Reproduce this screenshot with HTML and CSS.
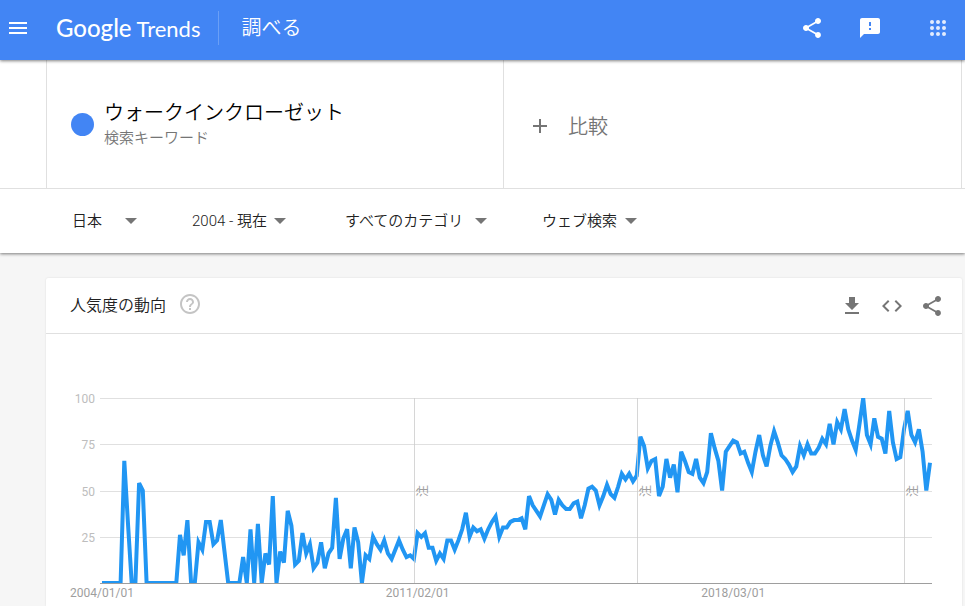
FILE: index.html
```
<!DOCTYPE html>
<html lang="ja">
<head>
  <meta charset="UTF-8">
  <meta name="viewport" content="width=device-width, initial-scale=1.0">
  <title>Google Trends</title>
  <link rel="stylesheet" href="styles.css">
</head>
<body>

  <!-- Header -->
  <header class="header">
    <button class="icon-btn menu-btn" aria-label="メニュー">
      <svg width="24" height="24" viewBox="0 0 24 24"><path d="M3 18h18v-2H3v2zm0-5h18v-2H3v2zm0-7v2h18V6H3z"/></svg>
    </button>
    <a href="#" class="logo"><span class="logo-google">Google</span> <span class="logo-trends">Trends</span></a>
    <a href="#" class="page-name">調べる</a>
    <div class="header-actions">
      <button class="icon-btn" aria-label="共有">
        <svg width="24" height="24" viewBox="0 0 24 24"><path d="M18 16.08c-.76 0-1.44.3-1.96.77L8.91 12.7c.05-.23.09-.46.09-.7s-.04-.47-.09-.7l7.05-4.11c.54.5 1.25.81 2.04.81 1.66 0 3-1.34 3-3s-1.34-3-3-3-3 1.34-3 3c0 .24.04.47.09.7L8.04 9.81C7.5 9.31 6.79 9 6 9c-1.66 0-3 1.34-3 3s1.34 3 3 3c.79 0 1.5-.31 2.04-.81l7.12 4.16c-.05.21-.08.43-.08.65 0 1.61 1.31 2.92 2.92 2.92s2.92-1.31 2.92-2.92-1.31-2.92-2.92-2.92z"/></svg>
      </button>
      <button class="icon-btn" aria-label="フィードバックを送信">
        <svg width="24" height="24" viewBox="0 0 24 24"><path d="M20 2H4c-1.1 0-1.99.9-1.99 2L2 22l4-4h14c1.1 0 2-.9 2-2V4c0-1.100-.9-2-2-2zm-7 12h-2v-2h2v2zm0-4h-2V6h2v4z"/></svg>
      </button>
      <button class="icon-btn apps-btn" aria-label="Google アプリ">
        <svg width="24" height="24" viewBox="0 0 24 24">
          <circle cx="6" cy="6" r="2"/><circle cx="12" cy="6" r="2"/><circle cx="18" cy="6" r="2"/>
          <circle cx="6" cy="12" r="2"/><circle cx="12" cy="12" r="2"/><circle cx="18" cy="12" r="2"/>
          <circle cx="6" cy="18" r="2"/><circle cx="12" cy="18" r="2"/><circle cx="18" cy="18" r="2"/>
        </svg>
      </button>
    </div>
  </header>

  <!-- Search terms and filters -->
  <section class="explore-bar">
    <div class="terms">
      <div class="term">
        <span class="term-dot"></span>
        <div>
          <div class="term-title">ウォークインクローゼット</div>
          <div class="term-type">検索キーワード</div>
        </div>
      </div>
      <button class="compare-btn">
        <svg width="24" height="24" viewBox="0 0 24 24"><path d="M19 13h-6v6h-2v-6H5v-2h6V5h2v6h6v2z"/></svg>
        <span>比較</span>
      </button>
    </div>
    <div class="filters">
      <div class="filter filter-geo">
        <select aria-label="国"><option>日本</option><option>米国</option></select>
      </div>
      <div class="filter filter-time">
        <select aria-label="期間"><option>2004 - 現在</option><option>過去 5 年</option></select>
      </div>
      <div class="filter filter-category">
        <select aria-label="カテゴリ"><option>すべてのカテゴリ</option><option>ショッピング</option></select>
      </div>
      <div class="filter filter-property">
        <select aria-label="検索の種類"><option>ウェブ検索</option><option>画像検索</option></select>
      </div>
    </div>
  </section>

  <!-- Interest over time -->
  <main class="card">
    <div class="card-header">
      <div class="card-title">
        <h1>人気度の動向</h1>
        <button class="icon-btn help-btn" aria-label="ヘルプ">
          <svg width="24" height="24" viewBox="0 0 24 24"><path d="M11 18h2v-2h-2v2zm1-16C6.48 2 2 6.48 2 12s4.48 10 10 10 10-4.48 10-10S17.52 2 12 2zm0 18c-4.41 0-8-3.59-8-8s3.59-8 8-8 8 3.59 8 8-3.59 8-8 8zm0-14c-2.21 0-4 1.79-4 4h2c0-1.1.9-2 2-2s2 .9 2 2c0 2-3 1.75-3 5h2c0-2.25 3-2.5 3-5 0-2.21-1.79-4-4-4z"/></svg>
        </button>
      </div>
      <div class="card-actions">
        <button class="icon-btn" aria-label="CSV">
          <svg width="24" height="24" viewBox="0 0 24 24"><path d="M19 9h-4V3H9v6H5l7 7 7-7zM5 18v2h14v-2H5z"/></svg>
        </button>
        <button class="icon-btn" aria-label="埋め込み">
          <svg width="24" height="24" viewBox="0 0 24 24"><path d="M9.4 16.6L4.8 12l4.6-4.6L8 6l-6 6 6 6 1.4-1.4zm5.2 0l4.6-4.6-4.6-4.6L16 6l6 6-6 6-1.4-1.4z"/></svg>
        </button>
        <button class="icon-btn" aria-label="共有">
          <svg width="24" height="24" viewBox="0 0 24 24"><path d="M18 16.08c-.76 0-1.44.3-1.96.77L8.91 12.7c.05-.23.09-.46.09-.7s-.04-.47-.09-.7l7.05-4.11c.54.5 1.25.81 2.04.81 1.66 0 3-1.34 3-3s-1.34-3-3-3-3 1.34-3 3c0 .24.04.47.09.7L8.04 9.81C7.5 9.31 6.79 9 6 9c-1.66 0-3 1.34-3 3s1.34 3 3 3c.79 0 1.5-.31 2.04-.81l7.12 4.16c-.05.21-.08.43-.08.65 0 1.61 1.31 2.92 2.92 2.92s2.92-1.31 2.92-2.92-1.31-2.92-2.92-2.92z"/></svg>
        </button>
      </div>
    </div>
    <svg class="chart" id="chart" viewBox="0 0 916 272" role="img" aria-label="人気度の動向"></svg>
  </main>

  <script src="script.js"></script>
</body>
</html>
```

FILE: styles.css
```
* {
  box-sizing: border-box;
}
body {
  margin: 0;
  background: #f6f6f6;
  color: #212121;
  font-family: Roboto, "Noto Sans CJK JP", sans-serif;
  font-size: 15px;
}
button, select {
  border: 0;
  padding: 0;
  background: none;
  color: inherit;
  font: inherit;
  cursor: pointer;
}
svg {
  display: block;
  fill: currentColor;
}
.icon-btn {
  flex: none;
}

/* header */
.header {
  position: relative;
  display: flex;
  align-items: center;
  height: 60px;
  padding: 0 15px 4px 6px;
  background: #4285f4;
  color: #fff;
  box-shadow: 0 1px 3px rgba(0, 0, 0, 0.5);
}
.logo {
  margin-left: 26px;
  padding-right: 18px;
  border-right: 1px solid #6a9ff6;
  color: #fff;
  font-family: Lato, sans-serif;
  font-size: 22px;
  line-height: 33px;
  text-decoration: none;
  white-space: nowrap;
}
.logo-google {
  font-size: 24px;
  font-weight: 500;
}
.page-name {
  margin-left: 22px;
  padding-bottom: 4px;
  color: #fff;
  font-size: 20px;
  font-weight: 350;
  text-decoration: none;
}
.header-actions {
  display: flex;
  gap: 34px;
  margin-left: auto;
}
.apps-btn {
  margin-left: 10px;
  opacity: 0.85;
}

/* terms + filters */
.explore-bar {
  background: #fff;
  box-shadow: 0 1px 3px rgba(0, 0, 0, 0.5);
}
.terms {
  display: grid;
  grid-template-columns: 1fr 1fr;
  height: 129px;
  padding: 0 3px 0 46px;
  border-bottom: 1px solid #e0e0e0;
}
.term {
  display: flex;
  align-items: center;
  gap: 10px;
  padding-left: 24px;
  border-left: 1px solid #e0e0e0;
  border-right: 1px solid #e0e0e0;
}
.term-dot {
  width: 23px;
  height: 23px;
  border-radius: 50%;
  background: #4285f4;
}
.term-title {
  color: #000;
  font-size: 20px;
  font-weight: 350;
  line-height: 28px;
}
.term-type {
  color: #757575;
  font-weight: 350;
  line-height: 22px;
}
.compare-btn {
  display: flex;
  align-items: center;
  gap: 16px;
  padding: 3px 0 0 24px;
  border-right: 1px solid #e0e0e0;
  color: #757575;
  font-size: 20px;
  font-weight: 350;
}
.filters {
  display: flex;
  align-items: center;
  gap: 55px;
  height: 64px;
  padding-left: 72px;
}
.filter {
  display: flex;
  align-items: center;
}
.filter select {
  flex: 1;
  appearance: none;
  font-weight: 350;
}
.filter::after {
  content: "";
  margin-left: 7px;
  border: 6px solid transparent;
  border-top-color: #757575;
  border-bottom: 0;
  pointer-events: none;
}
.filter-geo {
  width: 65px;
}
.filter-time {
  margin-right: 4px;
}
.filter-category {
  width: 142px;
}

/* card */
.card {
  margin: 25px 3px 0 46px;
  background: #fff;
  border-radius: 2px 2px 0 0;
  box-shadow: 0 0 2px rgba(0, 0, 0, 0.12);
}
.card-header {
  display: flex;
  align-items: center;
  height: 56px;
  padding: 0 18px 0 24px;
  border-bottom: 1px solid #e0e0e0;
}
.card-title {
  display: flex;
  align-items: center;
  gap: 12px;
  padding-bottom: 4px;
}
.card-title h1 {
  margin: 0;
  font-size: 16px;
  font-weight: 350;
}
.help-btn {
  color: #c4c4c4;
}
.card-actions {
  display: flex;
  gap: 16px;
  margin-left: auto;
  color: #757575;
}

/* chart */
.chart {
  width: 100%;
}
.grid-line {
  stroke: #e0e0e0;
}
.base-line {
  stroke: #9e9e9e;
}
.note-line {
  stroke: #ccc;
  stroke-opacity: 0.8;
}
.trend-line {
  fill: none;
  stroke: #2196f3;
  stroke-width: 4;
}
.axis-label {
  fill: #bdbdbd;
  font-size: 12px;
  text-anchor: end;
}
.date-label {
  fill: #9e9e9e;
  font-size: 12px;
  text-anchor: middle;
}
.note-label {
  fill: #9e9e9e;
  font-size: 12px;
  text-anchor: middle;
}
```

FILE: script.js
```
// monthly values, starting January 2004
const values = [
  0, 0, 0, 0, 0, 0, 66, 32, 0, 0, 54, 50,
  0, 0, 0, 0, 0, 0, 0, 0, 0, 26, 15, 34,
  0, 0, 22, 18, 33, 33, 21, 23, 34, 17, 0, 0,
  0, 0, 14, 0, 29, 0, 32, 0, 16, 10, 47, 0,
  17, 11, 39, 31, 10, 12, 27, 16, 21, 8, 11, 22,
  8, 16, 19, 46, 13, 24, 29, 8, 30, 22, 0, 15,
  13, 25, 21, 18, 23, 16, 13, 18, 23, 18, 14, 15,
  13, 27, 25, 27, 19, 19, 12, 16, 13, 23, 23, 18,
  23, 29, 38, 25, 30, 28, 29, 24, 29, 33, 36, 25,
  30, 30, 33, 34, 34, 35, 29, 47, 42, 39, 36, 42,
  48, 45, 37, 45, 42, 40, 40, 43, 44, 35, 42, 51,
  52, 50, 42, 47, 53, 48, 46, 52, 59, 56, 59, 55,
  58, 79, 74, 62, 66, 67, 47, 52, 67, 57, 64, 49,
  71, 66, 60, 59, 67, 57, 54, 60, 81, 73, 66, 50,
  71, 74, 77, 76, 70, 71, 65, 60, 71, 80, 69, 63,
  74, 82, 76, 69, 67, 64, 60, 63, 74, 69, 75, 70,
  70, 73, 78, 75, 86, 75, 87, 83, 94, 83, 77, 72,
  86, 100, 80, 75, 89, 79, 78, 70, 93, 76, 67, 68,
  83, 93, 80, 76, 83, 71, 50, 65
];

const left = 54;
const right = 886;
const top0 = 64;
const bottom = 249;

const xAt = i => 56 + i * (828 / (values.length - 1));
const yAt = v => bottom - v * (bottom - top0) / 100;
const lineY = v => Math.round(yAt(v)) + 0.5;

let svg = `<clipPath id="plot"><rect x="${left}" y="${top0}" width="${right - left}" height="${bottom - top0}"/></clipPath>`;

// horizontal grid and its labels
[100, 75, 50, 25].forEach(v => {
  svg += `<line class="grid-line" x1="${left}" x2="${right}" y1="${lineY(v)}" y2="${lineY(v)}"/>`;
  svg += `<text class="axis-label" x="49" y="${lineY(v) + 4}">${v}</text>`;
});
svg += `<line class="base-line" x1="${left}" x2="${right}" y1="${lineY(0)}" y2="${lineY(0)}"/>`;

// trend
const points = values.map((v, i) => `${xAt(i).toFixed(1)},${yAt(v).toFixed(1)}`).join(' ');
svg += `<polyline class="trend-line" clip-path="url(#plot)" points="${points}"/>`;

// notes at January 2011, 2016 and 2022
[84, 144, 216].forEach(i => {
  const x = Math.round(xAt(i)) + 0.5;
  svg += `<line class="note-line" x1="${x}" x2="${x}" y1="${top0}" y2="${bottom}"/>`;
  svg += `<text class="note-label" transform="translate(${x + 12} 157) rotate(-90)">注</text>`;
});

[[0, '2004/01/01'], [85, '2011/02/01'], [170, '2018/03/01']].forEach(([i, label]) => {
  svg += `<text class="date-label" x="${xAt(i)}" y="263">${label}</text>`;
});

document.getElementById('chart').innerHTML = svg;
```
